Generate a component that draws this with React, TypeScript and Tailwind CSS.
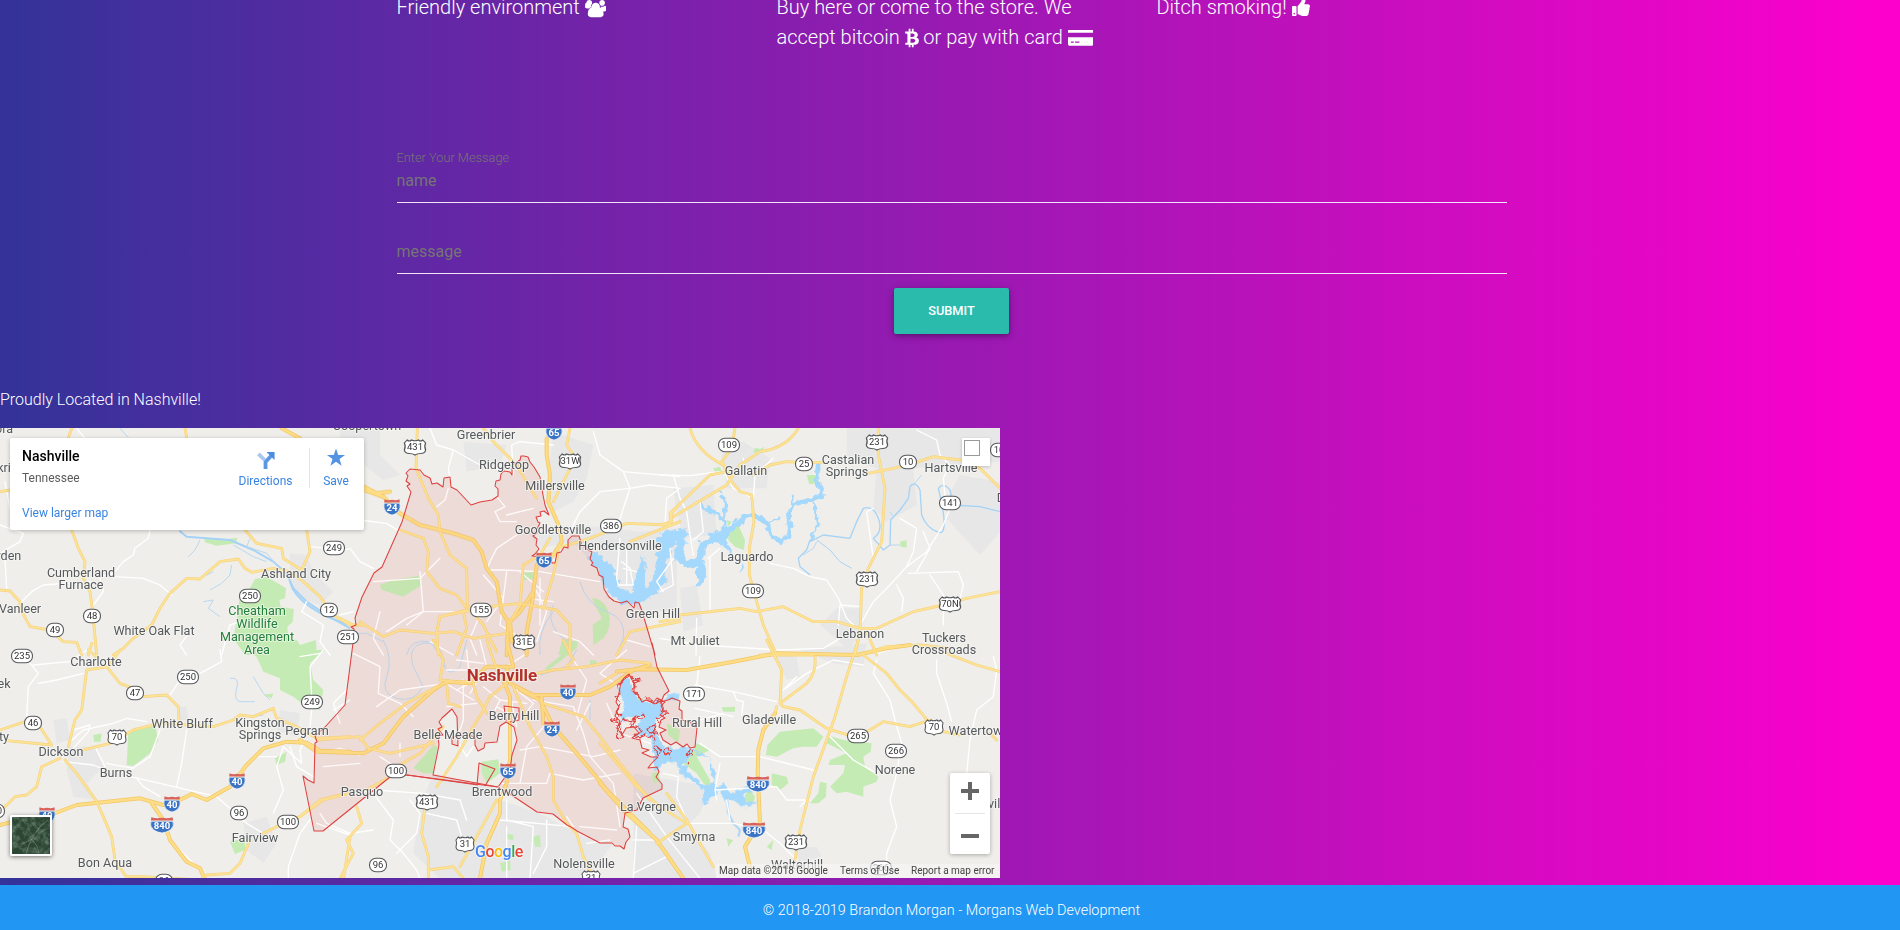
import type { ReactNode } from "react";
import { FaBtc, FaThumbsUp } from "react-icons/fa";

/* ---------- map data: every tile is digitised at three units per pixel ---------- */

type Tile = {
  x: number;
  y: number;
  urban?: string[];
  parks?: string[];
  lakes?: string[];
  rivers?: [string, number][];
  streams?: string[];
  minor?: string[];
  major?: string[];
  highway?: string[];
};

const tiles: Tile[] = [
  {
    x: 0,
    y: 425,
    urban: ["M870 385L920 390L940 440L1000 500L960 540L900 520L870 470Z", "M1000 10H1050V315H1092V0Z"],
    parks: [
      "M612 340L660 345L712 338L708 355L650 362L615 352Z",
      "M765 462L800 455L858 490L855 520L838 525L842 545L882 552L878 590L862 605L865 640L890 645L900 660L948 645L950 690H735L700 640L715 560L720 500L750 490Z",
    ],
    rivers: [
      ["M538 317L560 335L620 340L690 345L760 375L820 410L860 445L880 490L920 530L980 570L1050 610", 6],
      ["M870 470Q880 510 930 545T1050 600", 6],
    ],
    streams: [
      "M360 10L385 38",
      "M600 345L585 375L565 395M700 360L760 395L800 410M695 420L690 450L665 475L630 495M640 440L610 455M750 340L740 365L800 385L830 420M610 530L640 525L625 550L660 575",
    ],
    minor: [
      "M230 10L255 40M15 170L30 250M0 300L70 325L60 350L0 385M450 315L445 340L405 370L400 390L370 410L340 445L300 455M345 455L430 460L480 480L515 510M15 400L20 490M270 470L130 480L95 500L65 530M280 540L310 500L300 460M570 620L540 660L560 690M665 690L690 600L720 590M930 365L985 370M1000 40L985 120M920 530L905 560L970 600L960 650L990 690",
    ],
    major: [
      "M215 10L205 38M215 315L235 370L255 410L250 460L270 500L278 560L290 690",
      "M0 495L30 498L60 530L60 550L90 605L150 615L190 650L230 652L245 690M265 690L275 655",
      "M340 690L370 670L400 640L455 600L480 550L510 505L560 460L600 462L660 410L715 402L735 430L755 442L820 430L870 440L910 470L960 515L1000 570L1050 600",
      "M735 315L770 355L845 370L850 400L905 435L930 380L920 315",
      "M0 200L30 195M555 10L560 38",
    ],
    highway: ["M845 10L900 40M1092 190L1150 215"],
  },
  {
    x: 340,
    y: 425,
    urban: [
      "M0 10H120V90L180 150L130 165L72 120V40H0Z",
      "M560 320L720 300L900 320L1010 310V560L900 560L870 530L800 520L770 430L700 350L600 370Z",
      "M640 20L760 60L740 160L700 230L640 260L620 180Z",
      "M370 50L500 60L480 120L380 140Z",
    ],
    parks: [
      "M120 480L160 465L235 452L245 480L190 515L125 495Z",
      "M550 445L580 440L582 462L552 465Z",
      "M755 520Q790 520 805 560T790 640L760 660L758 600L785 580Z",
      "M665 650L690 640V690H655Z",
    ],
    lakes: ["M745 390L785 400L830 440L815 470L800 490L780 440L750 415Z", "M905 390L918 440L912 500H890L900 440Z"],
    rivers: [
      ["M765 400L790 430L815 490L850 515L900 518L938 495L958 460L965 410L978 360L1005 330L1030 325", 34],
      ["M900 515L890 480L905 440", 18],
      ["M830 500L815 455L800 420", 24],
    ],
    streams: [
      "M730 350L750 380M640 540Q620 580 650 620T700 640M600 690Q590 620 640 560M0 625L80 625L130 650M200 690Q210 640 270 650L300 690",
      "M720 470Q740 540 800 560T850 640L830 690",
    ],
    minor: [
      "M270 10L290 60L340 75L325 130L330 160M325 190L315 225L290 245M340 75L420 120L500 140M520 150L515 60L540 50L640 60M760 20L780 90L850 140L870 190L850 250L835 300M870 190L930 180L1020 190M850 140L1020 155",
      "M470 215L495 245L465 260L480 290L530 290M530 330L500 350L470 370L450 410L440 435L490 435L600 440L780 470M580 250L500 270",
      "M0 570L40 560M0 380L30 370L60 410L100 430M60 285L140 295L180 320M140 620L200 580L250 560L380 560M100 470L240 460L300 400",
      "M600 460V600M580 480L620 560L590 650M560 520L640 530M540 440L610 500M500 440L480 600L560 650M430 450L490 520L440 590",
      "M690 320L720 260L780 200L870 190M840 340L830 460L835 480L880 480L870 430L845 410M1000 400L950 470L970 500M640 620L720 650L760 690",
      "M850 430L890 440M860 370V480M420 570L390 640L410 690M270 650L340 690M120 560L100 640L130 690M240 440L250 560L200 600",
    ],
    major: [
      "M232 10L228 130L265 220L295 270L300 320L330 390L380 430L382 540L430 600L470 680",
      "M430 10L460 50L530 120L570 190L590 220",
      "M690 10L680 60L700 90M640 230L690 130L660 110",
      "M180 315L250 340L265 380L260 440L300 490L350 510L380 550",
      "M60 590L130 635L180 615L280 625L340 620L400 640L500 625",
      "M0 580L40 600L75 600M380 555L300 575L290 620L295 690M300 575L450 545L540 535L650 555L690 600L690 690",
      "M630 340L600 390L550 420L540 540L510 590M655 380L640 450L610 550",
      "M650 370L750 340L860 295L990 300L995 265L1020 235M870 350L1020 290",
      "M350 690L380 610L370 560M830 690L870 620L1020 590",
    ],
    highway: [
      "M72 195L130 215L180 265L240 300L340 325L400 345L425 380L440 430L470 470L485 560L505 590L500 690",
      "M620 40L620 90L630 150L625 230L660 310L665 350L640 390L590 420L580 500L540 560L510 590L515 650",
      "M580 510L560 620V690M72 185L110 205L150 200",
    ],
  },
  {
    x: 660,
    y: 425,
    urban: [
      "M560 10H1020V110L760 130L770 240L680 290L640 250L650 130L560 100Z",
      "M860 280L960 390L1020 320V170L900 150L860 220Z",
      "M40 190L160 180L170 330L70 340L50 260Z",
      "M60 490L110 480L130 600L70 620Z",
      "M530 550H600V640L560 670L480 600Z",
      "M180 60L250 50L330 100L320 190L200 190Z",
    ],
    parks: [
      "M205 320L235 300L255 345L252 375L225 365L205 345Z",
      "M440 150H470L478 175L448 178Z",
      "M285 68L300 72L312 65L305 85L280 82ZM160 130L180 125L185 140L165 142Z",
      "M720 350L740 345V368L722 365Z",
      "M200 285L215 290L205 305Z",
    ],
    lakes: [
      "M110 360L150 330L185 315L215 290L240 278L262 268L275 275L225 312L195 345L215 370V390L185 355L150 350L125 375Z",
      "M250 410L255 430L240 440L245 420Z",
      "M105 400L135 390L130 420L140 450L120 490H105L112 455Z",
    ],
    rivers: [
      ["M0 345L25 328L55 335L65 355L55 385L70 410L95 418L115 400L125 365L160 338L195 318", 24],
      ["M0 420L0 470", 18],
      ["M190 325L192 285L165 262L125 247M190 290L200 240L185 205", 10],
      ["M255 275L300 275L322 300L335 335L360 350L382 340L390 300L385 265L405 238L450 225L480 215L485 195L470 165L475 120", 14],
      ["M325 300L355 278M400 240L395 210M460 230L470 270L475 300L450 345", 7],
      ["M450 345L440 375L415 400L420 425L450 450M450 350L490 330L570 340L590 290L610 250Q640 240 655 280T640 340L670 375L690 360L692 285L720 255L745 220L750 185Q765 165 780 195L785 270Q800 310 835 322T835 190Q850 170 870 195L880 240L960 245L1020 260", 4],
      ["M470 345L510 375L540 410L575 430", 3],
    ],
    streams: ["M470 350L460 370L430 390M700 275L690 260M690 360L720 360M760 180L785 150"],
    minor: [
      "M330 415L400 430L450 455L500 465L535 520L560 580L590 610M740 425L690 480L640 530L600 600M740 425L800 380L850 300L870 250M770 440L810 370L790 320M720 280L770 310L760 380L740 425M640 400L620 260L640 250",
      "M770 15L830 45L840 90L870 120L850 160L855 210M745 445L895 440L910 480L900 520M810 450L850 510V600M710 480L730 520L725 560M150 400L150 560M180 370L145 400",
      "M0 150L90 152L180 140M40 150L60 220L80 260L90 330L100 390M15 300L20 220L60 190M280 220L285 150L340 100M250 100L260 150M190 140L220 190L270 215M120 230L130 320L100 345",
      "M110 580L108 690M0 640L120 660L360 675L490 670L540 640M535 600L540 540L605 545M0 500L40 480L30 370",
    ],
    major: [
      "M90 10Q110 80 190 120L215 170L240 200L275 210L282 290L268 370L268 450L290 530L310 600L350 690",
      "M0 300L35 290L30 265L150 150L200 140M40 275L200 180L240 120L300 80Q380 70 415 10M205 140L185 110L215 70L225 10",
      "M280 150L330 120L380 110L420 112H490M625 145L700 130L760 115L820 95L900 105L960 130L1020 190",
      "M655 10V90L675 190L665 350L625 430L605 490L600 620L585 690",
      "M60 570L240 550L290 560L370 545L460 590L530 590L600 610L650 610L760 560L850 540L920 520L1020 500",
      "M620 620L650 690M600 690L680 665L780 660L870 670M0 590L60 580M300 690H460",
    ],
  },
  {
    x: 0,
    y: 650,
    urban: [
      "M210 290L290 290L310 350L260 400L290 450L220 440L200 360Z",
      "M160 210L200 205L210 270L170 280Z",
      "M730 520L800 500L830 580L790 640L740 600Z",
      "M840 180L900 190L890 260L830 240ZM540 170L560 170L565 210H540Z",
    ],
    parks: [
      "M735 0H975L950 20L930 40L940 90L970 120L960 180L920 170L880 140L840 120L840 85L790 65L770 20Z",
      "M385 245L465 225L475 270L450 310L400 348L380 345Z",
      "M280 255L305 250L302 275L282 275Z",
      "M825 325L860 305L855 335L830 345Z",
      "M790 135L820 130L815 145ZM690 575L735 565L735 600L705 612Z",
    ],
    streams: ["M690 85Q720 80 710 115T720 155L765 155M760 80L790 130L810 150M755 200L790 195"],
    minor: [
      "M290 690M75 20L115 70L85 110L80 200M115 100L170 90L250 70M100 45L210 35L260 0M510 135L540 90M600 70L665 35L660 0",
      "M205 280L250 240L340 220L380 205L440 215M215 300L265 245L270 225L220 240M560 240L545 340L530 410M285 290L315 350M190 335L280 345L330 365M390 360L450 320L480 240M390 380L480 400L650 440L740 520L790 550M410 385L430 410L480 440M320 340L400 355",
      "M500 560L545 605L600 660M935 180L930 230L900 300L905 340L850 290L830 350L850 420L820 490M970 0L930 50L935 140M760 320L830 320M1000 180L1050 150M930 510L900 550L865 650V690",
      "M870 290L890 350L940 380M950 520L1050 555",
    ],
    major: [
      "M265 0L295 25M360 0L325 50L260 60L245 180L225 210L205 290M320 50L360 100L400 115M430 140L500 135L535 170L537 215",
      "M0 240L75 215M120 230L155 285L20 272M250 300L330 280L400 240L480 220L640 230L700 210L720 195L760 200L820 175L830 205L880 225L950 265L1050 260",
      "M180 325L125 350L110 410L80 435L45 440L0 485M195 330L230 370L290 455L310 500L335 560L345 630L385 690",
      "M790 550L830 530M750 570L720 640L690 670L620 675M1050 430L970 450L900 500L830 530M380 680H430L600 690L620 675M1030 690L1050 560",
    ],
    highway: [
      "M0 525L40 515M150 495L230 465L420 445L490 465L520 460L575 432L620 450L690 410L740 345L790 295L860 275L920 278L960 302L1050 305",
      "M455 460L490 510L510 570L560 635L600 655L615 690",
    ],
  },
  {
    x: 300,
    y: 640,
    urban: ["M400 400L590 445L600 715H420L340 640L360 500Z", "M600 480L720 520L850 590L940 610L860 715H590Z"],
    parks: [
      "M340 385L400 315L412 320L400 400L370 400Z",
      "M545 365L595 358L600 400L560 430L545 400Z",
      "M620 580L640 585V600L622 598ZM700 590L720 585L722 620H705ZM600 670L630 660L632 690L605 695Z",
      "M810 5L835 0L830 25L740 95L735 85L790 40ZM870 60L890 62L888 78L870 76Z",
    ],
    streams: ["M250 0Q280 60 260 110T290 175T370 140L340 80Q320 20 370 10T430 60T480 80L500 0M600 100L620 130M720 105L800 80L830 30M870 180V240"],
    minor: [
      "M50 340L120 325L180 345M240 350L300 390M300 350L300 310M70 380L180 370M160 40L240 80L235 160L300 190L340 230M120 250L100 190L140 150M230 200L300 150L440 130",
      "M120 470L220 450L370 460L480 480L500 540M220 460L280 540L270 600L310 640L350 690L360 715M330 480L360 520L350 580L290 640M500 640L470 540L380 520M620 480L620 540L700 560L690 715M600 540L820 560L800 530M620 560V715M740 540L740 620L700 700",
      "M600 430L740 430L750 400L850 420L960 400M660 330L720 320L880 350L960 330M740 250L680 320L660 430M700 180L820 200L850 280L870 350L940 430L960 560M820 60L860 120L830 230M920 190L960 280L1050 310M870 190L830 270M550 140L600 180L580 220M420 120L520 180M490 120V240L470 300L500 350L520 320M440 200L530 190M650 150L700 190L670 230M630 160L650 260M600 180L680 190M590 200L660 240",
      "M60 520L80 550L150 580L220 570M840 560L950 570M860 610L930 600M60 40L0 50M960 140L900 100L980 30M1050 20L980 0M500 30L510 130L470 150M470 60L550 70M440 90L520 90M620 80L680 40M540 0L560 80L510 160",
    ],
    major: [
      "M50 300L180 290L205 325L270 340L400 310M180 300L240 250L320 190L430 130M290 380L360 340L430 260M410 440L470 350L520 260L545 220L570 170L620 130",
      "M0 530L60 480L120 465M270 410L200 450M170 500L185 550L140 600L160 640L120 715M375 500L365 580L385 650V715M385 690L460 680L490 715M590 480L530 590L480 680",
      "M400 0L430 60L420 120L470 125L530 125M560 0L580 60L600 110L620 120M640 140L690 260L740 350L760 410L760 480L800 550L830 580L850 650L880 715",
      "M730 190L850 230L900 290L960 370L1050 480M620 120L760 90L860 80L960 60L1050 70M790 0L820 60L800 80M520 130L530 170L560 220M440 130L445 190L480 200",
    ],
    highway: [
      "M0 300L50 335L190 340L250 310L310 230L400 150L440 125L510 130L560 80L640 80L620 0M620 80L630 130L700 165L870 165L930 140L1000 90L1050 75",
      "M610 120L630 170V360L620 430L600 480L600 520L560 610L540 715M660 150L720 180L760 260L830 340L880 400L920 450L990 520L1050 580",
      "M725 170L730 250",
    ],
  },
  {
    x: 600,
    y: 640,
    urban: [
      "M100 400L330 440L300 520L260 560L330 640L350 715H100Z",
      "M520 40L590 50L600 110L560 120ZM600 30L800 10L790 80L700 70Z",
      "M580 625L650 620L665 650L600 665Z",
    ],
    parks: [
      "M498 345L502 315L540 275L640 265L670 290L650 320L610 320L580 325L530 350Z",
      "M680 285L730 300L815 310L812 335L790 350L795 380L835 410L830 425L790 440L790 470L740 455L710 460L690 440L730 400L735 375L685 375L690 360L740 340L680 310Z",
      "M515 400L560 410L565 430L540 450L515 435ZM630 490L655 460L660 425L680 430L678 470L655 490Z",
      "M365 202L405 200L405 215H370Z",
      "M250 370L270 350L290 310L330 330L290 350L330 420L335 450L310 430L290 400Z",
      "M435 465L450 450L465 470L460 490L440 490ZM380 595L400 600L385 620ZM500 620L520 600L515 630Z",
      "M200 250L240 270L235 310L205 285ZM155 400L175 395L180 425L160 430ZM90 170L130 175L120 190L95 185Z",
    ],
    lakes: [
      "M65 120L90 115L100 155L110 175L145 190L180 175L190 195L190 225L160 235L165 275L180 300L190 320L240 325L290 325L270 350L250 375L280 410L310 430L330 440L350 410L330 350L300 350L285 330L330 350L335 400L350 440L370 435L400 460L430 440L460 450L430 470L440 490L470 485L450 500L430 500L400 480L385 475L380 490L365 470L360 450L330 470L320 490L300 490L310 465L300 440L250 410L225 370L200 365L170 390L160 370L165 345L155 330L160 310L140 280L105 290L110 260L130 230L90 230L75 250L60 230L75 190L60 160Z",
      "M190 185L200 165L240 160L235 180L205 180Z",
    ],
    rivers: [["M380 470L385 520L400 550L420 570L415 590", 6]],
    minor: [
      "M300 50L290 140L280 170M285 135L400 155L530 185M400 155L410 180L430 185L425 225M285 205L400 230M285 245L370 220M590 110L550 150L620 100L700 60L790 75M300 310L360 350L480 350L640 390M360 370L345 450L350 480M345 450L530 440L560 480L630 480M685 285L760 360L820 395",
      "M830 60L820 100L870 180L885 240L905 310L890 400L870 480L890 560L860 640V715M1010 60L1010 100L1040 190L1055 245M1180 50L1190 90L1180 170L1130 210L1110 300L1100 400M400 550L490 570L540 610L590 660M260 550L400 550M190 400L235 410L230 470L260 540M300 715L200 590L110 460M170 600L200 650L100 700M100 600L170 600L230 690M110 560L100 715M380 480L390 540M900 20L830 40M620 480L600 500",
    ],
    major: [
      "M0 130L50 100M500 0L545 90L540 190L550 200L600 210L680 265L760 290L810 270L850 245L930 260L990 240M645 50Q650 100 620 130L540 190M530 200L525 220",
      "M775 0L740 110L705 230L680 300L640 410L600 570L585 660M790 45L860 100L900 150L940 190L990 250M1030 275L1080 285M1040 40L1130 75L1200 95M1170 280L1190 300",
      "M170 610L260 550L180 500L110 440L0 310",
      "M200 460L260 540L340 680",
    ],
    highway: [
      "M50 95L110 88L260 90L400 65L530 40L770 45L860 25L930 15M525 220L490 270L475 330L473 400L480 550L460 580L435 620L450 680",
      "M0 430L80 520L170 600L250 715",
    ],
  },
];

const county =
  "M410 469L420 470L424 475L430 478L432 484L437 483L443 487L444 478L450 477L451 487L457 490L471 505L480 502L492 500L498 496L498 489L495 486L496 481L500 480L501 474L504 471L510 472L512 475L512 465L517 462L520 460L521 456L524 456L528 457L530 462L534 467L540 477L543 495L545 505L549 515L544 511L540 512L541 516L536 517L538 522L540 523L537 529L537 533L533 536L537 539L536 545L539 549L535 554L532 556L545 557L551 559L552 563L555 563L557 553L561 552L564 547L568 548L568 540L572 536L579 536L582 545L587 549L592 552L590 559L593 563L591 565L597 568L599 575L603 577L604 589L609 597L614 601L621 603L627 601L630 604L634 608L635 602L639 603L642 611L655 655L652 643L657 667L669 691L664 695L661 702L668 700L672 698L680 701L679 709L682 711L682 720L690 722L697 728L695 747L690 748L687 744L683 747L676 742L671 745L663 740L660 733L666 730L659 727L661 720L665 718L660 715L664 711L661 706L665 702L657 698L653 703L646 700L642 702L638 695L634 693L634 683L640 681L632 680L629 674L624 678L621 682L619 693L616 702L619 707L615 716L620 721L617 728L622 735L626 728L634 727L639 733L632 738L640 740L642 748L649 750L642 753L651 757L658 757L651 764L648 768L657 767L659 772L656 777L662 784L662 789L643 798L637 810L625 813L623 827L628 829L630 837L626 842L624 849L620 846L615 846L612 843L600 843L577 831L571 827L567 825L553 814L537 812L513 796L498 787L407 775L390 777L323 831L314 831L303 776L308 780L314 783L315 743L317 742L315 736L325 727L345 705L353 643L354 629L351 627L356 625L355 618L362 597L374 573L382 567L402 522L411 492L407 486L410 484L406 481L408 476L406 473Z";

const enclave =
  "M433 775L439 745L438 736L443 735L438 729L442 727L439 722L442 718L452 709L457 717L458 746L452 744L452 737L468 735L475 737L475 745L478 751L484 748L485 743L497 742L500 726L506 722L514 727L517 740L512 755L510 770L498 787Z";

const lakeShore =
  "M619 686L625 679L630 675L634 680L640 678L635 684L633 690L641 699L646 698L654 703L660 699L664 704L661 709L667 713L660 718L655 716L661 724L653 725L658 733L652 733L655 741L646 735L641 739L634 735L640 729L632 725L636 719L643 718L644 714L638 716L631 722L623 719L620 726L623 734L619 740L617 730L618 722L612 720L621 715L616 711L619 703L615 698L620 694ZM664 751l3 -3l4 4l-2 5zM648 728l5 -2l1 5l-4 2zM690 750l3 1l-2 5l-3 -2zM687 764l2 -1v3zM657 746l3 2l-3 6l-2 -4zM645 730l-3 5l2 3z";

type Label = [string, number, number];

const labels: Label[] = [
  ["Coopertown", 367, 430],
  ["Greenbrier", 486, 439],
  ["Ridgetop", 504, 469],
  ["Millersville", 555, 490],
  ["Goodlettsville", 553, 534],
  ["Hendersonville", 620, 550],
  ["Green Hill", 653, 618],
  ["Gallatin", 746, 475],
  ["Castalian", 848, 464],
  ["Springs", 847, 476],
  ["Hartsville", 951, 472],
  ["Laguardo", 747, 561],
  ["Lebanon", 860, 638],
  ["Mt Juliet", 695, 645],
  ["Tuckers", 944, 642],
  ["Crossroads", 944, 654],
  ["Cumberland", 81, 577],
  ["Furnace", 81, 589],
  ["Ashland City", 296, 578],
  ["Vanleer", 20, 613],
  ["White Oak Flat", 154, 635],
  ["yden", 8, 560],
  ["Charlotte", 96, 666],
  ["White Bluff", 182, 728],
  ["Kingston", 260, 727],
  ["Springs", 260, 739],
  ["Pegram", 307, 735],
  ["Dickson", 61, 756],
  ["Burns", 116, 777],
  ["Fairview", 255, 842],
  ["Bon Aqua", 105, 867],
  ["ek", 4, 688],
  ["ty", 4, 741],
  ["kri", 4, 472],
  ["ora", 4, 433],
  ["Pasquo", 362, 796],
  ["Belle Meade", 448, 739],
  ["Berry Hill", 514, 720],
  ["Brentwood", 502, 796],
  ["Nolensville", 584, 868],
  ["Smyrna", 694, 841],
  ["La Vergne", 648, 811],
  ["Rural Hill", 697, 727],
  ["Gladeville", 769, 724],
  ["Norene", 895, 774],
  ["Watertown", 979, 735],
  ["Walterhill", 797, 869],
  ["ville", 999, 808],
  ["D", 1001, 502],
];

const stateRoutes: Label[] = [
  ["249", 334, 548], ["250", 250, 596], ["12", 329, 610], ["251", 348, 637], ["48", 92, 616], ["49", 55, 630],
  ["235", 22, 656], ["47", 135, 693], ["250", 188, 677], ["249", 312, 702], ["46", 33, 723], ["96", 239, 813],
  ["100", 288, 822], ["100", 396, 771], ["96", 378, 865], ["155", 481, 610], ["386", 611, 526], ["109", 729, 445],
  ["25", 804, 464], ["10", 908, 462], ["141", 950, 503], ["109", 753, 591], ["171", 694, 694], ["265", 858, 736],
  ["266", 896, 751], ["10", 999, 450], ["840", -6, 811], ["266", 881, 868], ["96", 164, 881],
];

const usRoutes: Label[] = [
  ["431", 415, 447], ["31W", 570, 461], ["31E", 524, 642], ["231", 877, 442], ["231", 867, 579], ["70N", 950, 604],
  ["70", 117, 737], ["431", 427, 802], ["31", 465, 844], ["70", 934, 727], ["231", 796, 842], ["31", 591, 878],
];

const interstates: Label[] = [
  ["65", 554, 432], ["24", 392, 507], ["65", 544, 560], ["40", 237, 781], ["40", 172, 804], ["840", 162, 825],
  ["40", 47, 815], ["40", 568, 692], ["24", 552, 729], ["65", 508, 771], ["840", 758, 784], ["840", 754, 830],
];

function Roads({ layer, color, width }: { layer: "minor" | "major" | "highway"; color: string; width: number }) {
  return (
    <g fill="none" stroke={color} strokeWidth={width} strokeLinejoin="round" strokeLinecap="round">
      {tiles.map((t, i) => (
        <g key={i} transform={`translate(${t.x} ${t.y}) scale(.33333)`}>
          {t[layer]?.map((d) => <path key={d} d={d} />)}
        </g>
      ))}
    </g>
  );
}

function Areas({ layer, color }: { layer: "urban" | "parks" | "lakes"; color: string }) {
  return (
    <g fill={color}>
      {tiles.map((t, i) => (
        <g key={i} transform={`translate(${t.x} ${t.y}) scale(.33333)`}>
          {t[layer]?.map((d) => <path key={d} d={d} />)}
        </g>
      ))}
    </g>
  );
}

function StateShield({ text, x, y }: { text: string; x: number; y: number }) {
  const w = text.length > 2 ? 21 : 17;
  return (
    <g transform={`translate(${x} ${y})`}>
      <rect x={-w / 2} y={-6.8} width={w} height={13.6} rx={6.5} fill="#fff" stroke="#55585c" strokeWidth={1.1} />
      <text y={3.3} textAnchor="middle" fontSize={9.5} fill="#333">{text}</text>
    </g>
  );
}

function UsShield({ text, x, y }: { text: string; x: number; y: number }) {
  const k = text.length > 2 ? 1.12 : 0.95;
  return (
    <g transform={`translate(${x} ${y})`}>
      <path
        transform={`scale(${k} 1)`}
        d="M-7 -7Q-5 -5 -3 -7Q0 -5.4 3 -7Q5 -5 7 -7L9.5 -4Q8 -1 9.5 3Q9 6.5 5 6.5Q2 6.5 0 8Q-2 6.5 -5 6.5Q-9 6.5 -9.5 3Q-8 -1 -9.5 -4Z"
        fill="#fff"
        stroke="#55585c"
        strokeWidth={1.1}
      />
      <text y={3.3} textAnchor="middle" fontSize={9.5} fill="#333">{text}</text>
    </g>
  );
}

function InterstateShield({ text, x, y }: { text: string; x: number; y: number }) {
  const k = text.length > 2 ? 1.42 : 1;
  return (
    <g transform={`translate(${x} ${y})`}>
      <g transform={`scale(${k} 1)`}>
        <path d="M-7.8 -3.8H7.8Q9 1 6 5Q3 7.500 0 8Q-3 7.500 -6 5Q-9 1 -7.800 -3.800Z" fill="#3b74c4" stroke="#fff" strokeWidth={0.6} />
        <path d="M-7.500 -7.800Q-4 -6 0 -7.200Q4 -6 7.500 -7.800L7.800 -4.600H-7.800Z" fill="#d8635c" />
      </g>
      <text y={4.1} textAnchor="middle" fontSize={9.5} fontWeight={700} fill="#fff">{text}</text>
    </g>
  );
}

function MapDrawing() {
  return (
    <svg className="block" width={1000} height={450} viewBox="0 428 1000 450" fontFamily="Roboto, sans-serif" fontWeight={400}>
      <filter id="shore" filterUnits="userSpaceOnUse" x={0} y={428} width={1000} height={450}>
        <feTurbulence type="fractalNoise" baseFrequency=".14" numOctaves="2" seed="3" />
        <feDisplacementMap in="SourceGraphic" scale="9" xChannelSelector="R" yChannelSelector="G" />
      </filter>
      <rect x={0} y={428} width={1000} height={450} fill="#f0eeea" />
      <Areas layer="urban" color="#e7e7e7" />
      <path d={county + enclave} fill="#dc4b4b" fillOpacity={0.08} fillRule="evenodd" />
      <path d="M477 785L479 763L495 769L485 786Z" fill="#dc4b4b" fillOpacity={0.08} />
      <Areas layer="parks" color="#c4ebb4" />
      <g filter="url(#shore)">
        <Areas layer="lakes" color="#a5d8fd" />
        <g fill="none" stroke="#a5d8fd" strokeLinejoin="round" strokeLinecap="round">
          {tiles.map((t, i) => (
            <g key={i} transform={`translate(${t.x} ${t.y}) scale(.33333)`}>
              {t.rivers?.filter(([, w]) => w > 6).map(([d, w]) => <path key={d} d={d} strokeWidth={w} />)}
            </g>
          ))}
        </g>
      </g>
      <g fill="none" strokeLinejoin="round">
        {tiles.map((t, i) => (
          <g key={i} transform={`translate(${t.x} ${t.y}) scale(.33333)`}>
            {t.rivers?.filter(([, w]) => w <= 6).map(([d, w]) => <path key={d} d={d} stroke="#a5d3f7" strokeWidth={w} />)}
            {t.streams?.map((d) => <path key={d} d={d} stroke="#b9d7ef" strokeWidth={3} />)}
          </g>
        ))}
      </g>
      <Roads layer="minor" color="#ffffff" width={4} />
      <Roads layer="major" color="#f5d27c" width={8.5} />
      <Roads layer="highway" color="#f3c766" width={12} />
      <Roads layer="major" color="#fde396" width={5} />
      <Roads layer="highway" color="#fddd85" width={7.5} />
      <path d={county + enclave} fill="#dc4b4b" fillOpacity={0.03} fillRule="evenodd" />
      <g fill="none" stroke="#de4040" strokeWidth={1.05} strokeLinejoin="round">
        <path d={county} />
        <path d={enclave} />
        <path d={lakeShore} filter="url(#shore)" strokeWidth={1.2} />
        <path d="M477 785L479 763L495 769L485 786M506 721L504 706L519 708V720L510 722M407 775L478 785" />
      </g>
      <g fontSize={12.6} fill="#55595e" textAnchor="middle" stroke="#f6f5f2" strokeWidth={2} strokeOpacity={0.75} paintOrder="stroke" strokeLinejoin="round">
        {labels.map(([t, x, y]) => <text key={t + x + y} x={x} y={y}>{t}</text>)}
        <g fill="#23803b">
          <text x={257} y={615}>Cheatham</text>
          <text x={257} y={628}>Wildlife</text>
          <text x={257} y={641}>Management</text>
          <text x={257} y={654}>Area</text>
        </g>
        <text x={502} y={680.5} fontSize={17} fontWeight={700} fill="#b3302c">Nashville</text>
      </g>
      {stateRoutes.map(([t, x, y]) => <StateShield key={t + x + y} text={t} x={x} y={y} />)}
      {usRoutes.map(([t, x, y]) => <UsShield key={t + x + y} text={t} x={x} y={y} />)}
      {interstates.map(([t, x, y]) => <InterstateShield key={t + x + y} text={t} x={x} y={y} />)}
    </svg>
  );
}

/* ---------- map overlays ---------- */

function PlaceCard() {
  return (
    <div className="absolute left-[10px] top-[10px] flex h-[92px] w-[354px] rounded-[2px] bg-white font-normal shadow-[0_1px_4px_rgba(0,0,0,0.25)]">
      <div className="flex flex-1 flex-col pl-3 pt-[10px]">
        <div className="text-[14px] font-medium leading-4 text-black">Nashville</div>
        <div className="mt-[7px] text-[12px] leading-[14px] text-[#5b5b5b]">Tennessee</div>
        <div className="mt-[21px] text-[12px] leading-[14px] text-[#3a84df]">View larger map</div>
      </div>
      <div className="flex h-[50px] w-[87px] flex-col items-center pt-[12px]">
        <svg width="20" height="20" viewBox="0 0 20 20" fill="none">
          <path d="M2 4L8.500 10.500" stroke="#a9c8f0" strokeWidth="4" />
          <path d="M9.500 20V12.500L16 5.500" stroke="#5b97e2" strokeWidth="4" />
          <path d="M10.500 2H19V10.500Z" fill="#4a8de0" />
        </svg>
        <div className="mt-[5px] text-[12px] leading-[14px] text-[#3a84df]">Directions</div>
      </div>
      <div className="mt-[10px] flex h-[40px] w-[55px] flex-col items-center border-l border-[#e4e4e4] pr-[2px]">
        <svg width="20" height="20" viewBox="0 0 20 20" fill="#5293e2">
          <path d="M10 .5L12.300 7.400H19.500L13.700 11.700L15.900 18.700L10 14.400L4.100 18.700L6.300 11.700L.5 7.400H7.700Z" />
        </svg>
        <div className="mt-[7px] text-[12px] leading-[14px] text-[#3a84df]">Save</div>
      </div>
    </div>
  );
}

function ZoomControl() {
  return (
    <div className="absolute bottom-[24px] right-[10px] flex h-[81px] w-[40px] flex-col items-center rounded-[2px] bg-white shadow-[0_1px_4px_rgba(0,0,0,0.3)]">
      <svg width="18" height="40" viewBox="0 0 18 40" fill="#666">
        <path d="M7 9H11V16H18V20H11V27H7V20H0V16H7Z" />
      </svg>
      <div className="h-px w-[30px] bg-[#e6e6e6]" />
      <svg width="18" height="40" viewBox="0 0 18 40" fill="#666">
        <path d="M0 20H18V24H0Z" />
      </svg>
    </div>
  );
}

function SatelliteThumb() {
  return (
    <div className="absolute left-[10px] top-[387px] h-[41px] w-[42px] overflow-hidden rounded-[2px] border-2 border-white shadow-[0_1px_4px_rgba(0,0,0,0.5)]">
      <svg className="block" width="38" height="37" viewBox="0 0 38 37">
        <filter id="canopy">
          <feTurbulence type="fractalNoise" baseFrequency=".16" numOctaves="4" seed="7" />
          <feColorMatrix values="0 0 0 0 .4  0 0 0 0 .5  0 0 0 0 .42  1.200 0 0 0 -.5" />
        </filter>
        <rect width="38" height="37" fill="#2b4632" />
        <rect width="38" height="37" filter="url(#canopy)" />
        <path d="M36 3Q28 8 22 18T14 37M22 18L18 20L25 29L27 36M10 27L20 22" fill="none" stroke="#8f9c84" strokeOpacity=".5" />
      </svg>
    </div>
  );
}

function GoogleMark() {
  return (
    <div className="absolute left-[475px] top-[414px] text-[16px] font-medium leading-[20px] tracking-[-0.5px] [text-shadow:0_0_2px_#fff,0_0_2px_#fff]">
      <span className="text-[#4285f4]">G</span>
      <span className="text-[#ea4335]">o</span>
      <span className="text-[#fbbc05]">o</span>
      <span className="text-[#4285f4]">g</span>
      <span className="text-[#34a853]">l</span>
      <span className="text-[#ea4335]">e</span>
    </div>
  );
}

function MapEmbed() {
  return (
    <div className="relative h-[450px] w-[1000px] shrink-0 overflow-hidden">
      <MapDrawing />
      <PlaceCard />
      <div className="absolute right-[10px] top-[10px] h-7 w-7 bg-white p-[2px] shadow-[0_1px_3px_rgba(0,0,0,0.2)]">
        <div className="h-4 w-4 border border-[#999]" />
      </div>
      <ZoomControl />
      <SatelliteThumb />
      <GoogleMark />
      <div className="absolute bottom-0 right-0 flex h-[14px] w-[284px] items-center gap-[12px] whitespace-nowrap bg-[#f5f5f5]/70 pl-[3px] text-[10px] font-normal leading-[14px] text-[#444]">
        <span className="w-[109px]">Map data ©2018 Google</span>
        <span className="w-[59px]">Terms of Use</span>
        <span>Report a map error</span>
      </div>
    </div>
  );
}

/* ---------- page ---------- */

function Glyph({ box, className, d }: { box: string; className: string; d: string }) {
  return (
    <svg viewBox={box} className={`inline-block h-5 align-[-5.7px] ${className}`} fill="currentColor">
      <path d={d} />
    </svg>
  );
}

const usersPath =
  "M593 640q-162 5-265 128h-134q-82 0-138-40.500t-56-118.500q0-353 124-353 6 0 43.500 21t97.500 42.500 119 21.500q67 0 133-23-5 37-5 66 0 139 81 256zm1071 637q0 120-73 189.500t-194 69.500h-874q-121 0-194-69.500t-73-189.500q0-53 3.500-103.500t14-109 26.500-108.500 43-97.500 62-81 85.500-53.500 111.500-20q10 0 43 21.500t73 48 107 48 135 21.500 135-21.500 107-48 73-48 43-21.500q61 0 111.500 20t85.500 53.500 62 81 43 97.500 26.500 108.500 14 109 3.500 103.500zm-1024-1021q0 106-75 181t-181 75-181-75-75-181 75-181 181-75 181 75 75 181zm704 384q0 159-112.500 271.500t-271.500 112.500-271.500-112.500-112.500-271.500 112.500-271.500 271.500-112.500 271.500 112.500 112.500 271.500zm576 225q0 78-56 118.500t-138 40.500h-134q-103-123-265-128 81-117 81-256 0-29-5-66 66 23 133 23 59 0 119-21.500t97.500-42.500 43.500-21q124 0 124 353zm-128-609q0 106-75 181t-181 75-181-75-75-181 75-181 181-75 181 75 75 181z";

const cardPath =
  "M0 1504v-608h2304v608q0 66-47 113t-113 47h-1984q-66 0-113-47t-47-113zm640-224v128h384v-128h-384zm-384 0v128h256v-128h-256zm1888-1152q66 0 113 47t47 113v224h-2304v-224q0-66 47-113t113-47h1984z";

function Column({ children }: { children: ReactNode }) {
  return <div className="w-[380px] pl-[15px] pr-[15px] text-[20px] leading-[30px]">{children}</div>;
}

export default function App() {
  return (
    <div className="h-[930px] w-full overflow-hidden">
      <div className="flex h-[930px] w-[1903px] flex-col bg-[linear-gradient(90deg,#333399,#ff00cc)] font-['Roboto',sans-serif] font-light text-white">
        <div className="mx-auto -mt-[8px] flex h-[138px] w-[1140px] shrink-0">
          <Column>
            Friendly environment <Glyph box="0 0 1920 1792" className="w-[21.4px]" d={usersPath} />
          </Column>
          <Column>
            Buy here or come to the store. We accept bitcoin <FaBtc className="inline-block h-[20px] w-[14px] align-[-3.500px]" /> or pay with card{" "}
            <Glyph box="0 256 2304 1792" className="w-[25.7px]" d={cardPath} />
          </Column>
          <Column>
            Ditch smoking! <FaThumbsUp className="inline-block h-[18px] w-[18px] align-[-1.500px]" />
          </Column>
        </div>

        <form className="mx-auto flex h-[256px] w-[1140px] shrink-0 flex-col px-[15px]">
          <label className="mt-[20px] block h-[16px] text-[12.800px] leading-[16px] text-[#757575]">Enter Your Message</label>
          <input
            type="text"
            placeholder="name"
            className="block h-[37px] w-full border-b border-[#f2e4f6] bg-transparent pb-[7px] text-[16px] font-normal outline-none placeholder:text-[#757575] placeholder:opacity-100"
          />
          <input
            type="text"
            placeholder="message"
            className="mt-[26px] block h-[45px] w-full border-b border-[#f2e4f6] bg-transparent pt-px text-[16px] font-normal outline-none placeholder:text-[#757575] placeholder:opacity-100"
          />
          <button
            type="button"
            className="mx-auto mt-[14px] h-[46px] w-[115px] rounded-[2px] bg-[#2bbbad] text-[12.800px] font-medium uppercase shadow-[0_2px_5px_rgba(0,0,0,0.26),0_2px_10px_rgba(0,0,0,0.16)]"
          >
            Submit
          </button>
        </form>

        <p className="mt-[2px] h-[40px] shrink-0 text-[16px] leading-[24px]">Proudly Located in Nashville!</p>
        <MapEmbed />
        <footer className="mt-[7px] flex h-[45px] shrink-0 items-center justify-center bg-[#2196f3] pt-[7px] text-[14.400px]">
          © 2018-2019 Brandon Morgan - Morgans Web Development
        </footer>
      </div>
    </div>
  );
}
